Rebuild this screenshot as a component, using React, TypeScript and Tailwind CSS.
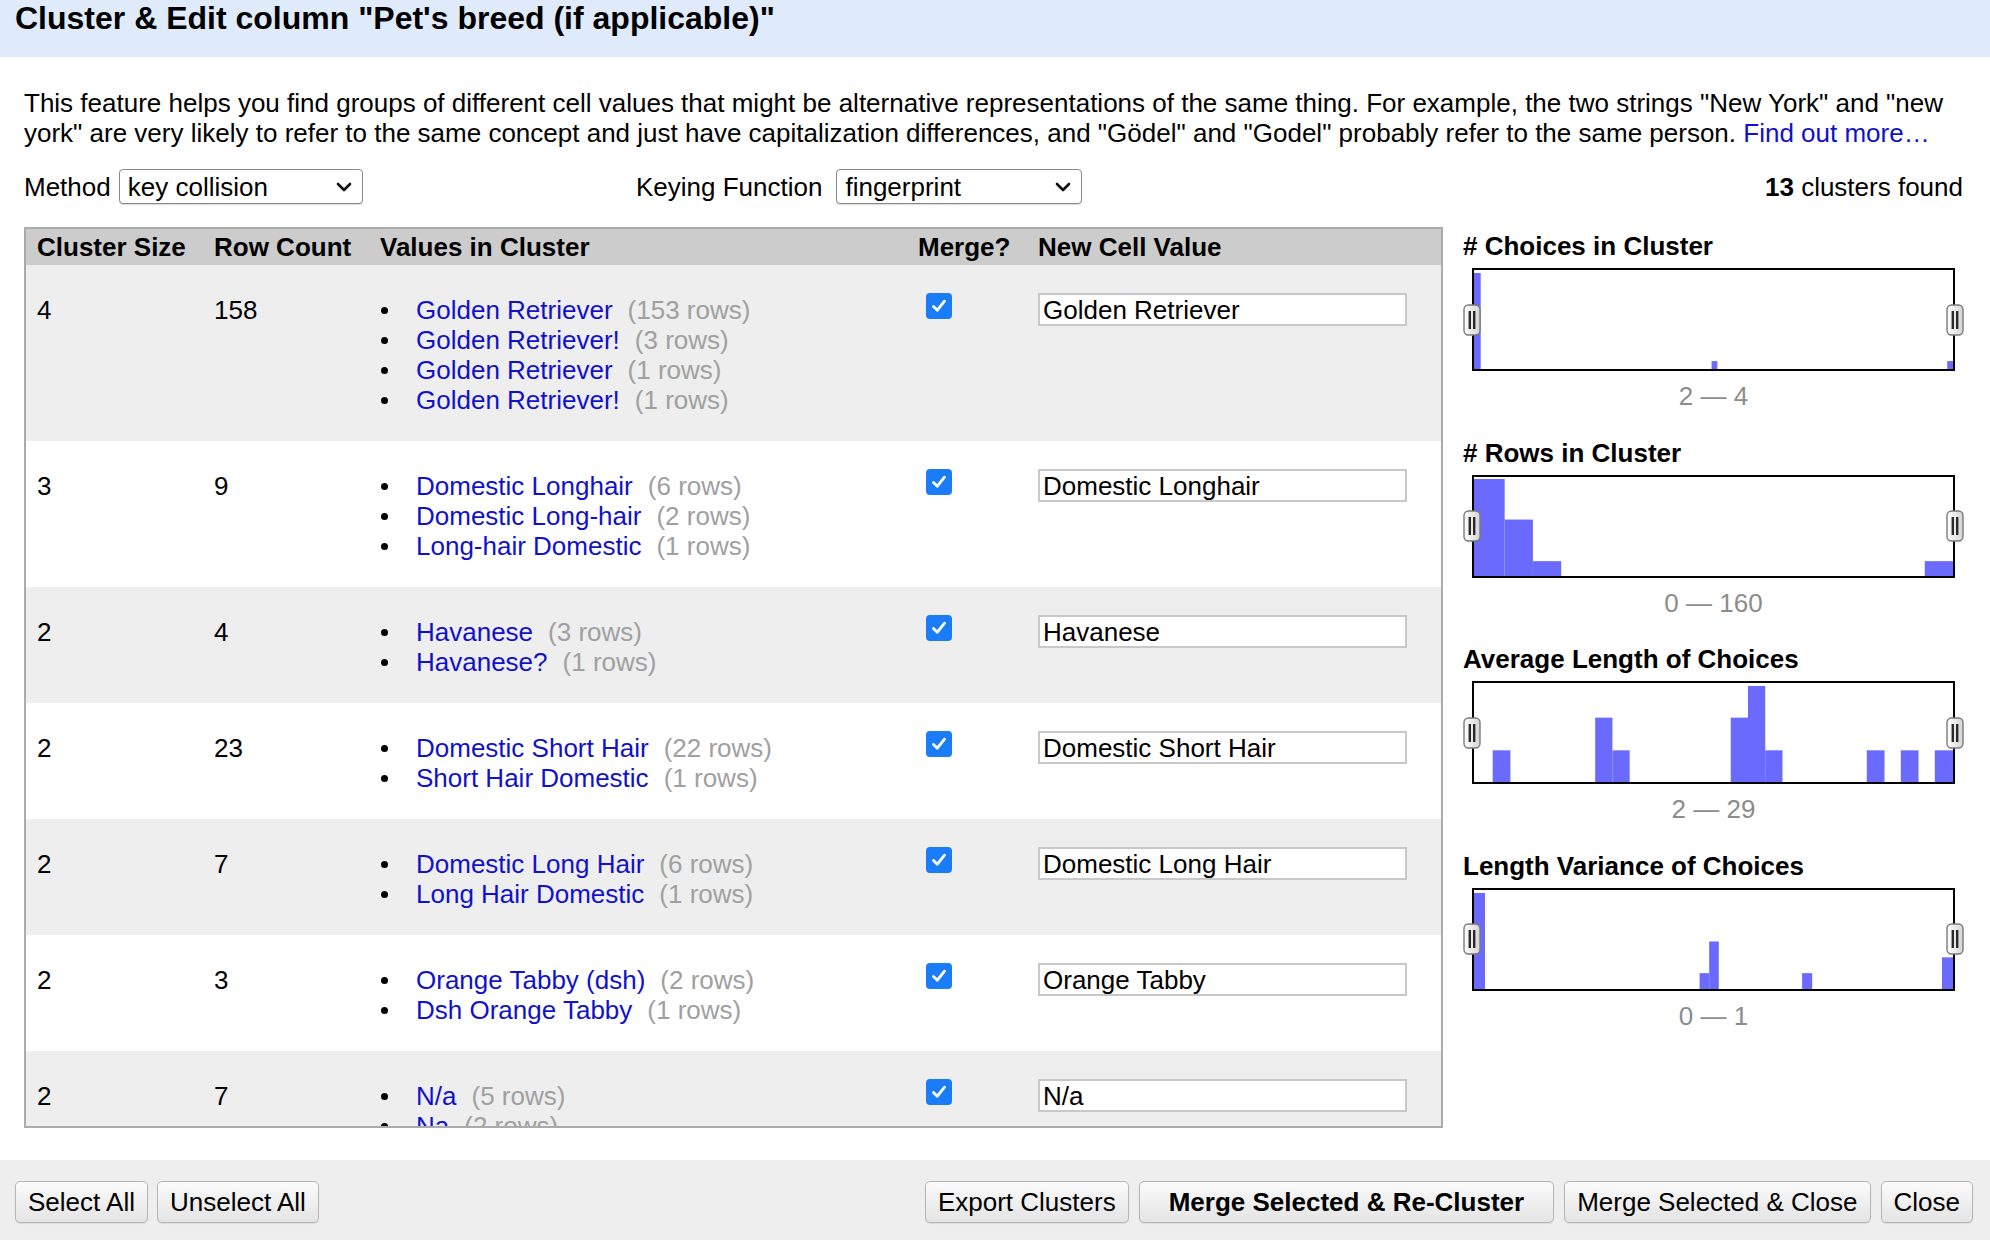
import React from 'react'

type Choice = { value: string; rows: number }
type Cluster = { size: number; count: number; choices: Array<Choice>; value: string }

const clusters: Array<Cluster> = [
  {
    size: 4,
    count: 158,
    value: 'Golden Retriever',
    choices: [
      { value: 'Golden Retriever', rows: 153 },
      { value: 'Golden Retriever!', rows: 3 },
      { value: 'Golden Retriever', rows: 1 },
      { value: 'Golden Retriever!', rows: 1 },
    ],
  },
  {
    size: 3,
    count: 9,
    value: 'Domestic Longhair',
    choices: [
      { value: 'Domestic Longhair', rows: 6 },
      { value: 'Domestic Long-hair', rows: 2 },
      { value: 'Long-hair Domestic', rows: 1 },
    ],
  },
  {
    size: 2,
    count: 4,
    value: 'Havanese',
    choices: [
      { value: 'Havanese', rows: 3 },
      { value: 'Havanese?', rows: 1 },
    ],
  },
  {
    size: 2,
    count: 23,
    value: 'Domestic Short Hair',
    choices: [
      { value: 'Domestic Short Hair', rows: 22 },
      { value: 'Short Hair Domestic', rows: 1 },
    ],
  },
  {
    size: 2,
    count: 7,
    value: 'Domestic Long Hair',
    choices: [
      { value: 'Domestic Long Hair', rows: 6 },
      { value: 'Long Hair Domestic', rows: 1 },
    ],
  },
  {
    size: 2,
    count: 3,
    value: 'Orange Tabby',
    choices: [
      { value: 'Orange Tabby (dsh)', rows: 2 },
      { value: 'Dsh Orange Tabby', rows: 1 },
    ],
  },
  {
    size: 2,
    count: 7,
    value: 'N/a',
    choices: [
      { value: 'N/a', rows: 5 },
      { value: 'Na', rows: 2 },
    ],
  },
]

// bars: [left %, width %, height %]
type Bar = [number, number, number]

const facets: Array<{ title: string; range: string; bars: Array<Bar> }> = [
  {
    title: '# Choices in Cluster',
    range: '2 — 4',
    bars: [
      [0, 1.4, 97],
      [49.6, 1.2, 8],
      [98.8, 1.2, 8],
    ],
  },
  {
    title: '# Rows in Cluster',
    range: '0 — 160',
    bars: [
      [0, 6.4, 98],
      [6.4, 5.9, 57],
      [12.3, 5.9, 15],
      [94.1, 5.9, 15],
    ],
  },
  {
    title: 'Average Length of Choices',
    range: '2 — 29',
    bars: [
      [3.9, 3.7, 32],
      [25.3, 3.6, 65],
      [28.9, 3.6, 32],
      [53.6, 3.6, 65],
      [57.2, 3.6, 97],
      [60.8, 3.6, 32],
      [82, 3.7, 32],
      [89.1, 3.7, 32],
      [96.2, 3.8, 32],
    ],
  },
  {
    title: 'Length Variance of Choices',
    range: '0 — 1',
    bars: [
      [0, 2.3, 97],
      [47.1, 2, 16],
      [49.1, 2, 48],
      [68.5, 2.1, 16],
      [97.7, 2.3, 32],
    ],
  },
]

const font = { fontFamily: '"Liberation Sans", Arial, Helvetica, sans-serif' }

const Chevron = () => (
  <svg width="16" height="10" viewBox="0 0 16 10">
    <polyline points="2,2 8,8 14,2" fill="none" stroke="#111" strokeWidth="2.6" strokeLinecap="round" strokeLinejoin="round" />
  </svg>
)

const Select = ({ value, width }: { value: string; width: string }) => (
  <div className={`flex h-[35px] items-center justify-between rounded-[4px] border border-[#8a8a8a] bg-white pl-[8px] pr-[10px] shadow-[0_1px_1px_rgba(0,0,0,0.15)] ${width}`}>
    <span>{value}</span>
    <Chevron />
  </div>
)

const Checkbox = () => (
  <span className="mt-[-2px] flex h-[26px] w-[26px] items-center justify-center rounded-[4px] bg-[#1a7cf6]">
    <svg width="18" height="18" viewBox="0 0 18 18">
      <polyline points="3.5,9.5 7.3,13.2 14.5,4.2" fill="none" stroke="white" strokeWidth="2.8" strokeLinecap="round" strokeLinejoin="round" />
    </svg>
  </span>
)

const Handle = ({ side }: { side: 'left' | 'right' }) => (
  <svg
    width="18"
    height="32"
    viewBox="0 0 18 32"
    className={side === 'left' ? 'absolute left-[-11px] top-1/2 -translate-y-1/2' : 'absolute right-[-11px] top-1/2 -translate-y-1/2'}
  >
    <defs>
      <linearGradient id={`hg-${side}`} x1="0" x2="1" y1="0" y2="0">
        <stop offset="0" stopColor="#ffffff" />
        <stop offset="1" stopColor="#d4d4d4" />
      </linearGradient>
    </defs>
    <rect x="1" y="1" width="16" height="30" rx="4.5" fill={`url(#hg-${side})`} stroke="#7a7a7a" strokeWidth="1.4" />
    <rect x="5.6" y="7" width="2.4" height="18" fill="#2a2a2a" />
    <rect x="10" y="7" width="2.4" height="18" fill="#2a2a2a" />
  </svg>
)

const Facet = ({ title, range, bars }: { title: string; range: string; bars: Array<Bar> }) => (
  <div className="mb-[26.5px]">
    <h3 className="text-[26px] font-bold leading-[30px]">{title}</h3>
    <div className="relative ml-[9px] mt-[7px] h-[103px] w-[483px] border-2 border-black bg-white">
      <svg className="absolute inset-0 h-full w-full" viewBox="0 0 100 100" preserveAspectRatio="none">
        {bars.map(([l, w, h], i) => (
          <rect key={i} x={l} y={100 - h} width={w} height={h} fill="#6a6aff" />
        ))}
      </svg>
      <Handle side="left" />
      <Handle side="right" />
    </div>
    <div className="ml-[9px] mt-[10px] w-[483px] text-center text-[26px] leading-[30px] text-[#8c8c8c]">{range}</div>
  </div>
)

const Button = ({ children, bold }: { children: React.ReactNode; bold?: boolean }) => (
  <button
    type="button"
    className={`h-[42px] rounded-[5px] border border-[#b5b5b5] bg-gradient-to-b from-[#fbfbfb] to-[#e4e4e4] text-[26px] leading-[30px] text-black shadow-[0_1px_1px_rgba(0,0,0,0.08)] ${bold ? 'px-[29px] font-bold' : 'px-[12px]'}`}
  >
    {children}
  </button>
)

export default function App() {
  return (
    <div className="flex h-[1240px] w-[1990px] flex-col overflow-hidden bg-white text-[26px] leading-[30px] text-black" style={font}>
      <div className="h-[57px] shrink-0 bg-[#dfeafb] pl-[15px]">
        <h1 className="text-[32px] font-bold leading-[36px]">Cluster &amp; Edit column "Pet's breed (if applicable)"</h1>
      </div>

      <div className="flex-1 px-[24px] pt-[31px]">
        <p>
          This feature helps you find groups of different cell values that might be alternative representations of the same thing. For example, the two strings "New York" and "new york" are very likely to refer to the same concept and just have capitalization differences, and "Gödel" and "Godel" probably refer to the same person.{' '}
          <a className="text-[#1111cc]">Find out more…</a>
        </p>

        <div className="mt-[21px] flex h-[35px] items-center">
          <div className="flex w-[612px] items-center gap-[8px]">
            <span>Method</span>
            <Select value="key collision" width="w-[244px]" />
          </div>
          <div className="flex items-center gap-[14px]">
            <span>Keying Function</span>
            <Select value="fingerprint" width="w-[246px]" />
          </div>
          <div className="ml-auto pr-[3px]">
            <b>13</b> clusters found
          </div>
        </div>

        <div className="mt-[23px] flex">
          <div className="h-[901px] w-[1419px] shrink-0 overflow-hidden border-2 border-[#ababab] bg-white">
            <table className="w-full table-fixed border-collapse">
              <colgroup>
                <col className="w-[177px]" />
                <col className="w-[166px]" />
                <col className="w-[538px]" />
                <col className="w-[120px]" />
                <col />
              </colgroup>
              <thead>
                <tr className="h-[36px] bg-[#cccccc] text-left font-bold">
                  <th className="pl-[11px]">Cluster Size</th>
                  <th className="pl-[11px]">Row Count</th>
                  <th className="pl-[11px]">Values in Cluster</th>
                  <th className="pl-[11px]">Merge?</th>
                  <th className="pl-[11px]">New Cell Value</th>
                </tr>
              </thead>
              <tbody>
                {clusters.map((c, i) => (
                  <tr key={i} className={i % 2 === 0 ? 'bg-[#eeeeee] align-top' : 'bg-white align-top'}>
                    <td className="pb-[26px] pl-[11px] pt-[30px]">{c.size}</td>
                    <td className="pb-[26px] pl-[11px] pt-[30px]">{c.count}</td>
                    <td className="pb-[26px] pl-[11px] pt-[30px]">
                      <ul>
                        {c.choices.map((ch, j) => (
                          <li key={j} className="flex items-center">
                            <span className="ml-[1px] mr-[28px] h-[7px] w-[7px] rounded-full bg-black" />
                            <a className="text-[#1111cc]">{ch.value}</a>
                            <span className="ml-[15px] text-[#a0a0a0]">({ch.rows} rows)</span>
                          </li>
                        ))}
                      </ul>
                    </td>
                    <td className="pb-[26px] pl-[19px] pt-[30px]">
                      <Checkbox />
                    </td>
                    <td className="pb-[26px] pl-[11px] pt-[30px]">
                      <div className="mt-[-2px] flex h-[33px] w-[369px] items-center border-2 border-[#c8c8c8] bg-white pl-[3px]">{c.value}</div>
                    </td>
                  </tr>
                ))}
              </tbody>
            </table>
          </div>

          <div className="flex-1 pl-[20px] pt-[4px]">
            {facets.map(f => (
              <Facet key={f.title} {...f} />
            ))}
          </div>
        </div>
      </div>

      <div className="flex h-[80px] shrink-0 items-start justify-between bg-[#eeeeee] pl-[15px] pr-[17px] pt-[21px]">
        <div className="flex gap-[9px]">
          <Button>Select All</Button>
          <Button>Unselect All</Button>
        </div>
        <div className="flex gap-[10px]">
          <Button>Export Clusters</Button>
          <Button bold>Merge Selected &amp; Re-Cluster</Button>
          <Button>Merge Selected &amp; Close</Button>
          <Button>Close</Button>
        </div>
      </div>
    </div>
  )
}
